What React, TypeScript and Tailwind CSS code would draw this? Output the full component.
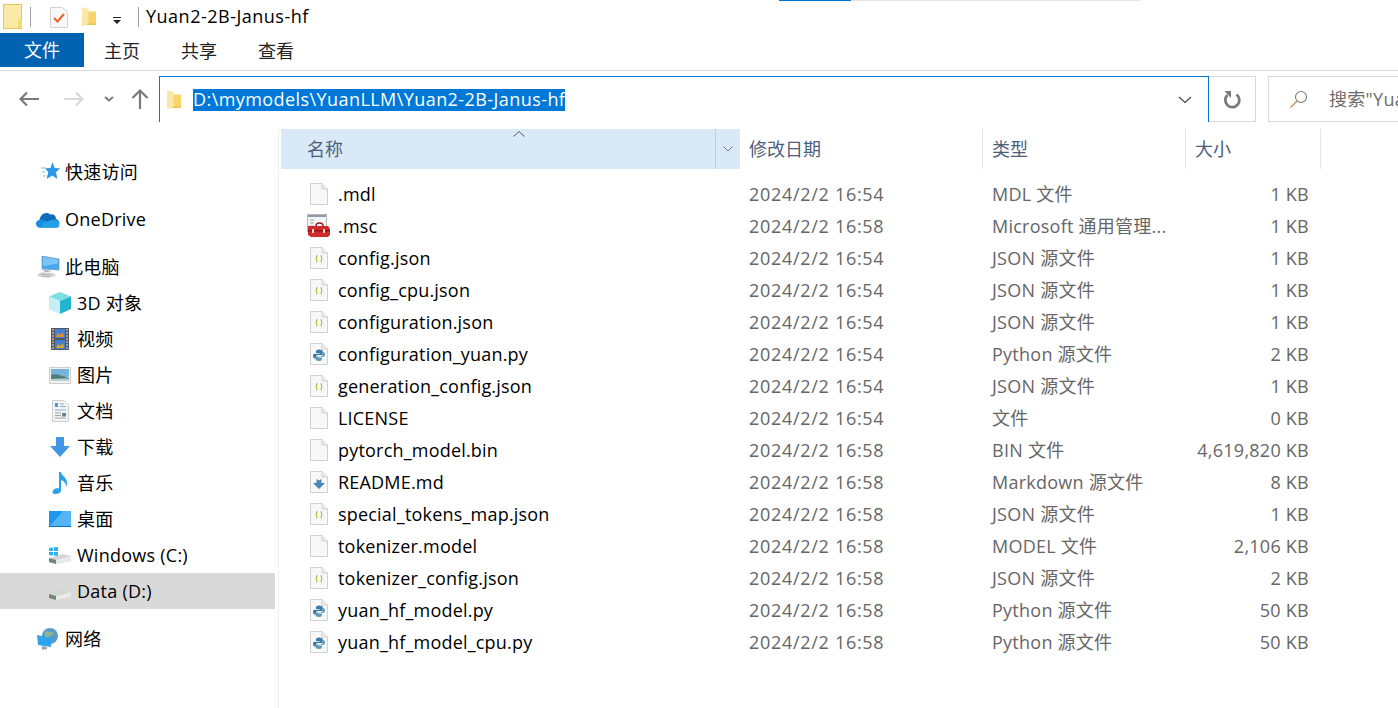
import { ReactNode } from 'react';

const font = "font-['Open_Sans','Noto_Sans_CJK_SC',sans-serif]";

type Kind = 'blank' | 'msc' | 'json' | 'py' | 'md';

const files: { name: string; date: string; type: string; size: string; kind: Kind }[] = [
  { name: '.mdl', date: '2024/2/2 16:54', type: 'MDL 文件', size: '1 KB', kind: 'blank' },
  { name: '.msc', date: '2024/2/2 16:58', type: 'Microsoft 通用管理...', size: '1 KB', kind: 'msc' },
  { name: 'config.json', date: '2024/2/2 16:54', type: 'JSON 源文件', size: '1 KB', kind: 'json' },
  { name: 'config_cpu.json', date: '2024/2/2 16:54', type: 'JSON 源文件', size: '1 KB', kind: 'json' },
  { name: 'configuration.json', date: '2024/2/2 16:54', type: 'JSON 源文件', size: '1 KB', kind: 'json' },
  { name: 'configuration_yuan.py', date: '2024/2/2 16:54', type: 'Python 源文件', size: '2 KB', kind: 'py' },
  { name: 'generation_config.json', date: '2024/2/2 16:54', type: 'JSON 源文件', size: '1 KB', kind: 'json' },
  { name: 'LICENSE', date: '2024/2/2 16:54', type: '文件', size: '0 KB', kind: 'blank' },
  { name: 'pytorch_model.bin', date: '2024/2/2 16:58', type: 'BIN 文件', size: '4,619,820 KB', kind: 'blank' },
  { name: 'README.md', date: '2024/2/2 16:58', type: 'Markdown 源文件', size: '8 KB', kind: 'md' },
  { name: 'special_tokens_map.json', date: '2024/2/2 16:58', type: 'JSON 源文件', size: '1 KB', kind: 'json' },
  { name: 'tokenizer.model', date: '2024/2/2 16:58', type: 'MODEL 文件', size: '2,106 KB', kind: 'blank' },
  { name: 'tokenizer_config.json', date: '2024/2/2 16:58', type: 'JSON 源文件', size: '2 KB', kind: 'json' },
  { name: 'yuan_hf_model.py', date: '2024/2/2 16:58', type: 'Python 源文件', size: '50 KB', kind: 'py' },
  { name: 'yuan_hf_model_cpu.py', date: '2024/2/2 16:58', type: 'Python 源文件', size: '50 KB', kind: 'py' },
];

function Page({ children }: { children?: ReactNode }) {
  return (
    <svg width="18" height="22" viewBox="0 0 18 22" className="shrink-0">
      <path d="M.5.5h11.500l5.500 5.500v15.500h-17z" fill="#f8f8f8" stroke="#d0d0d0" />
      <path d="M12 .5v5.500h5.500" fill="#ececec" stroke="#d0d0d0" />
      {children}
    </svg>
  );
}

function FileIcon({ kind }: { kind: Kind }) {
  if (kind === 'msc') {
    return (
      <svg width="24" height="24" viewBox="0 0 24 24" className="shrink-0 -ml-[3px] -mr-[3px]">
        <rect x=".5" y=".5" width="19" height="17" fill="#f4f4f4" stroke="#b9b9b9" />
        <rect x="1" y="1" width="18" height="2" fill="#8d9aa8" />
        <path d="M3 6h4M3 9h4M3 12h4" stroke="#9aa5b0" />
        <path d="M9 12c0-4 7-4 7 0" fill="none" stroke="#8a2020" strokeWidth="1.500" />
        <path d="M1 12h20l2 3v6l-2 2H4l-3-2z" fill="#cf2a2e" />
        <rect x="1" y="16" width="22" height="1.500" fill="#8f1518" />
        <rect x="5" y="15" width="2" height="4" fill="#e9d7c0" />
        <rect x="16" y="15" width="2" height="4" fill="#e9d7c0" />
      </svg>
    );
  }
  if (kind === 'json') {
    return (
      <Page>
        <path d="M7.500 8.500c-1.300 0-.9.9-.9 2.200 0 .8-.4.9-.9 1 .5.100.9.200.9 1 0 1.300-.4 2.200.9 2.200" fill="none" stroke="#bcbf3a" strokeWidth="1.200" />
        <path d="M10.500 8.500c1.300 0 .9.900.9 2.200 0 .8.400.9.900 1-.5.100-.9.200-.9 1 0 1.300.4 2.200-.9 2.200" fill="none" stroke="#bcbf3a" strokeWidth="1.200" />
      </Page>
    );
  }
  if (kind === 'py') {
    return (
      <Page>
        <path d="M9 6.500c-2.500 0-3 1-3 2v1.500h3.500v.8H4.500C3 10.800 3 12.500 3 13c0 1.500.7 2.500 2 2.500h1v-1.700c0-1 1-1.800 2-1.800h3c1 0 1.800-.8 1.800-1.800V8.500c0-1.200-1.300-2-3.800-2z" fill="#3b7ca8" />
        <path d="M9 18c2.500 0 3-1 3-2v-1.500H8.500v-.8h5c1.500 0 1.500-1.700 1.500-2.200 0-1.500-.7-2.500-2-2.500h-.5v1.700c0 1.800-1 2.800-2.500 2.800H7c-1 0-1.500.8-1.500 1.800V16c0 1.200 1 2 3.500 2z" fill="#5b9fc0" />
      </Page>
    );
  }
  if (kind === 'md') {
    return (
      <Page>
        <path d="M6.500 8l2.500 1.500L11.500 8v4H15l-6 6-6-6h3.500z" fill="#4a86b5" />
      </Page>
    );
  }
  return <Page />;
}

function FolderSmall() {
  return (
    <svg width="14" height="20" viewBox="0 0 14 20" className="shrink-0">
      <path d="M6 4.500h8V17H6z" fill="#f7d56c" />
      <path d="M0 0l6.500 2v15L0 19.500z" fill="#fbe8a4" />
      <path d="M6 16.500h8V18H4z" fill="#eec75a" />
    </svg>
  );
}

function SideIcon({ name }: { name: string }) {
  switch (name) {
    case 'star':
      return (
        <svg width="20" height="20" viewBox="0 0 20 20" className="ml-[3px]">
          <path d="M12.500 0l2.200 6 5.300.3-4 3.900 1.400 6.800-5-3.400-5.800 3.400 1.700-6.800L5 6.300l5.500-.3z" fill="#2f97ea" />
          <path d="M1 6h5M2 10h3M3 14h3" stroke="#a8d4f5" strokeWidth="1.300" />
        </svg>
      );
    case 'cloud':
      return (
        <svg width="24" height="17" viewBox="0 0 24 17">
          <path d="M4 16.500c-5 0-5-7-.5-7.500C4.500 3 10 0 14 3.500c5-1 6 3 6 4.500 4 .5 5 8.500 0 8.500z" fill="#0f6cbd" />
          <path d="M4 16.500c-5 0-5-7-.5-7.500 4-1 7 1 9 3 2-2 5-4 7.500-3.500 4 .5 4 8-.5 8z" fill="#1490df" />
          <path d="M8 16.500c-2 0-3-3 0-4.500 3-2 7-3 8-3.500 4 .5 8 1 7 8z" fill="#28a8ea" opacity=".7" />
        </svg>
      );
    case 'pc':
      return (
        <svg width="24" height="22" viewBox="0 0 24 22">
          <path d="M6 0l17 3v11l-17-1z" fill="#4aa8ef" stroke="#6f8ba3" strokeWidth=".6" />
          <path d="M7 1l15 2.600v4L7 10z" fill="#7cc5f7" />
          <path d="M6 14l10 1-6 1z" fill="#8a9aa5" />
          <path d="M6 16l12 1 2 3-8 2-12-2z" fill="#d6d8da" />
          <path d="M3 18l12 1M5 20l9 .5" stroke="#b2b5b8" />
        </svg>
      );
    case 'cube':
      return (
        <svg width="22" height="22" viewBox="0 0 22 22">
          <path d="M11 0l11 4.500-11 4.500L0 4.500z" fill="#7fdde6" />
          <path d="M0 4.500l11 4.500v13L0 17z" fill="#c6eff3" />
          <path d="M22 4.500L11 9v13l11-5z" fill="#25b4cd" />
        </svg>
      );
    case 'film':
      return (
        <svg width="18" height="22" viewBox="0 0 18 22">
          <rect width="18" height="22" fill="#54585c" />
          <rect x="4" y="1" width="10" height="9" fill="#3f7fd8" />
          <rect x="4" y="12" width="10" height="9" fill="#3f7fd8" />
          <path d="M5 9l2-4 2 2 3-3 1 5z" fill="#e88c2a" />
          <path d="M5 20l2-4 2 2 3-3 1 5z" fill="#d8a82a" />
          <path d="M1 2h2M1 5h2M1 8h2M1 11h2M1 14h2M1 17h2M1 20h2M15 2h2M15 5h2M15 8h2M15 11h2M15 14h2M15 17h2M15 20h2" stroke="#e4e4e4" />
        </svg>
      );
    case 'pic':
      return (
        <svg width="22" height="17" viewBox="0 0 22 17">
          <rect x=".5" y=".5" width="21" height="16" fill="#f1f1f1" stroke="#cfcfcf" />
          <rect x="2" y="2" width="18" height="8" fill="#78b3dc" />
          <path d="M2 8c5-2 8 0 18 3v3H2z" fill="#4f7f78" />
          <path d="M2 12c6 0 12-1 18 0v2H2z" fill="#b7cfd6" />
        </svg>
      );
    case 'doc':
      return (
        <svg width="17" height="22" viewBox="0 0 17 22">
          <path d="M.5.500H12L16.500 5v16.500H.5z" fill="#f3f3f3" stroke="#cfcfcf" />
          <path d="M3 3h3v4H3z" fill="#4a98dc" />
          <path d="M8 4h4M8 6.500h6M3 10h11" stroke="#7fb4dc" />
          <path d="M3 13h6M3 15.500h6M3 18h11" stroke="#a5a5a5" />
          <rect x="10" y="13" width="4" height="3.500" fill="#5a8a90" />
        </svg>
      );
    case 'down':
      return (
        <svg width="20" height="20" viewBox="0 0 20 20">
          <path d="M6 0h8v9h6L10 20 0 9h6z" fill="#3f97e6" />
        </svg>
      );
    case 'music':
      return (
        <svg width="16" height="22" viewBox="0 0 16 22">
          <path d="M7 0h2c.500 4 6 5 6 11 0 1.500-.5 3-1 4 0-4-2-6-5-7v10c0 3-3 4-6 4s-3-3-1-4.500c1-1 3-1.500 5-1z" fill="#27a3ea" />
        </svg>
      );
    case 'desk':
      return (
        <svg width="22" height="16" viewBox="0 0 22 16">
          <rect width="22" height="16" fill="#1e96f0" />
          <path d="M0 16L14 0h8v16z" fill="#54b4f5" />
          <rect y="15" width="22" height="1" fill="#0b6fc0" />
        </svg>
      );
    case 'win':
    case 'data':
      return (
        <svg width="22" height="17" viewBox="0 0 22 17">
          <path d="M0 11l14-4 8 2v5L7 17l-7-2z" fill="#d4d6d6" />
          <path d="M0 11l7 2v4l-7-2z" fill="#7c8080" />
          <path d="M7 13l15-4v5L7 17z" fill="#e8e9e9" />
          <path d="M3 14l2 .6" stroke="#39b54a" strokeWidth="1.200" />
          {name === 'win' && <path d="M0 1l4-.6V4H0zM5 .2L9 0v4H5zM0 5h4v3.500L0 8zM5 5h4v4l-4-.4z" fill="#27b4ee" />}
        </svg>
      );
    default:
      return (
        <svg width="22" height="22" viewBox="0 0 22 22">
          <circle cx="13" cy="8" r="8" fill="#5c9bc7" />
          <path d="M8 3c3 0 4 2 8 1 1 3-3 3-4 5s-3 1-4-1z" fill="#8fb98a" />
          <path d="M0 7l14 3v9L1 17z" fill="#2fa3ec" />
          <path d="M5 18l5 1v2l-5 1z" fill="#9aa5ad" />
        </svg>
      );
  }
}

function SideRow({ icon, label, indent, active }: { icon: string; label: string; indent?: boolean; active?: boolean }) {
  return (
    <div className={`flex h-9 items-center text-[18px] text-black ${active ? 'bg-[#d9d9d9]' : ''}`}>
      <div className={`flex justify-center ${indent ? 'ml-[47px] w-[26px]' : 'ml-[35px] w-[26px]'}`}>
        <SideIcon name={icon} />
      </div>
      <span className="ml-[4px] whitespace-nowrap tracking-[0.25px]">{label}</span>
    </div>
  );
}

function HeaderCell({ label, width, pl }: { label: string; width: string; pl: string }) {
  return (
    <div className={`flex h-10 items-center border-r border-[#e5e5e5] pt-px text-[18px] text-[#4c607a] ${width} ${pl}`}>{label}</div>
  );
}

export default function App() {
  return (
    <div className={`flex h-[708px] w-[1398px] flex-col overflow-hidden bg-white ${font}`}>
      {/* progress line along the top edge */}
      <div className="flex h-px shrink-0 pl-[779px]">
        <div className="w-[72px] bg-[#0078d7]" />
        <div className="w-[290px] bg-[#e6e6e6]" />
      </div>

      {/* title bar */}
      <div className="flex h-8 shrink-0 items-center">
        <svg width="20" height="25" viewBox="0 0 20 25" className="ml-[3px] mb-[2px]">
          <rect x=".5" y=".5" width="18" height="24" fill="#fbe9a8" stroke="#e8c65a" />
          <rect x="15" y="15" width="4" height="9" fill="#f8d970" />
        </svg>
        <div className="ml-[7px] h-5 w-px bg-[#a0a0a0]" />
        <svg width="18" height="21" viewBox="0 0 18 21" className="ml-[19px]">
          <path d="M.5.5h12l5 5v15H.5z" fill="#f8f8f8" stroke="#d2d2d2" />
          <path d="M4 11l3.500 3.500L14 7" fill="none" stroke="#e8602c" strokeWidth="2" />
        </svg>
        <div className="ml-[14px]">
          <FolderSmall />
        </div>
        <svg width="8" height="7" viewBox="0 0 8 7" className="ml-[17px] mt-[6px]">
          <rect width="8" height="1" fill="#222" />
          <path d="M0 3h8L4 7z" fill="#222" />
        </svg>
        <div className="ml-[17px] h-5 w-px bg-[#a0a0a0]" />
        <span className="mb-[2px] ml-[7px] whitespace-nowrap text-[18px] tracking-[0.5px] text-black">Yuan2-2B-Janus-hf</span>
      </div>

      {/* ribbon tabs */}
      <div className="flex h-[34px] shrink-0 text-[18px]">
        <div className="flex w-[84px] items-center justify-center bg-[#0063b1] text-white">文件</div>
        <div className="flex w-[77px] items-center pl-5 pt-[3px] text-[#222]">主页</div>
        <div className="flex w-[77px] items-center pl-5 pt-[3px] text-[#222]">共享</div>
        <div className="flex w-[77px] items-center pl-5 pt-[3px] text-[#222]">查看</div>
      </div>

      <div className="mt-[3px] h-px shrink-0 bg-[#d9d9d9]" />

      {/* address row */}
      <div className="mt-[5px] flex h-[46px] shrink-0 items-start">
        <svg width="20" height="16" viewBox="0 0 20 16" className="ml-[19px] mt-[15px] shrink-0">
          <path d="M20 8H2M8 1.500L1.500 8 8 14.500" fill="none" stroke="#7a7a7a" strokeWidth="2.200" />
        </svg>
        <svg width="20" height="16" viewBox="0 0 20 16" className="ml-[25px] mt-[15px] shrink-0">
          <path d="M0 8h18M12 1.500L18.500 8 12 14.500" fill="none" stroke="#d9d9d9" strokeWidth="2.200" />
        </svg>
        <svg width="10" height="6" viewBox="0 0 10 6" className="ml-[20px] mt-[20px] shrink-0">
          <path d="M1 1l4 3.500L9 1" fill="none" stroke="#7a7a7a" strokeWidth="2" />
        </svg>
        <svg width="18" height="20" viewBox="0 0 18 20" className="ml-[17px] mt-[13px] shrink-0">
          <path d="M9 20V2M1.500 9L9 1.500 16.500 9" fill="none" stroke="#7a7a7a" strokeWidth="2.200" />
        </svg>
        <div className="ml-[10px] flex h-[46px] w-[1050px] shrink-0 items-center border-x border-t border-[#0078d7] pl-[7px]">
          <FolderSmall />
          <span className="ml-[12px] flex h-[22px] items-center whitespace-nowrap bg-[#0078d7] text-[18px] tracking-[0.43px] text-white">
            D:\mymodels\YuanLLM\Yuan2-2B-Janus-hf
          </span>
          <svg width="14" height="8" viewBox="0 0 14 8" className="ml-auto mr-[16px]">
            <path d="M1 1l6 5.500L13 1" fill="none" stroke="#444" strokeWidth="1.200" />
          </svg>
        </div>
        <div className="flex h-[46px] w-[47px] shrink-0 items-center justify-center border-y border-r border-[#d9d9d9]">
          <svg width="20" height="20" viewBox="0 0 20 20">
            <path d="M14.500 5.500a7 7 0 1 1-9 .5" fill="none" stroke="#7a7a7a" strokeWidth="2.800" />
            <path d="M2.500 2h6.500v7z" fill="#7a7a7a" />
          </svg>
        </div>
        <div className="ml-3 flex h-[46px] w-[142px] shrink-0 items-center overflow-hidden border border-r-0 border-[#d9d9d9] pl-[21px]">
          <svg width="18" height="18" viewBox="0 0 18 18" className="shrink-0">
            <circle cx="11" cy="7" r="5.500" fill="none" stroke="#7a7a7a" strokeWidth="1.100" />
            <path d="M7 11l-6.500 6.500" stroke="#c98a4a" strokeWidth="1.300" />
          </svg>
          <span className="ml-[21px] whitespace-nowrap text-[18px] tracking-[0.3px] text-[#6d6d6d]">搜索"Yua</span>
        </div>
      </div>

      <div className="mt-[7px] flex min-h-0 flex-1">
        {/* navigation pane */}
        <div className="w-[279px] shrink-0 border-r border-[#f0f0f0] pt-[25px]">
          <div className="w-[275px]">
            <SideRow icon="star" label="快速访问" />
            <div className="mt-[11px]">
              <SideRow icon="cloud" label="OneDrive" />
            </div>
            <div className="mt-3">
              <SideRow icon="pc" label="此电脑" />
              <SideRow icon="cube" label="3D 对象" indent />
              <SideRow icon="film" label="视频" indent />
              <SideRow icon="pic" label="图片" indent />
              <SideRow icon="doc" label="文档" indent />
              <SideRow icon="down" label="下载" indent />
              <SideRow icon="music" label="音乐" indent />
              <SideRow icon="desk" label="桌面" indent />
              <SideRow icon="win" label="Windows (C:)" indent />
              <SideRow icon="data" label="Data (D:)" indent active />
            </div>
            <div className="mt-3">
              <SideRow icon="net" label="网络" />
            </div>
          </div>
        </div>

        {/* file list */}
        <div className="min-w-0 flex-1 pl-[2px]">
          <div className="flex h-10">
            <div className="relative flex h-10 w-[459px] bg-[#d9e9f8] text-[18px] text-[#4c607a]">
              <span className="flex flex-1 items-center pl-[26px] pt-px">名称</span>
              <svg width="12" height="6" viewBox="0 0 12 6" className="absolute left-[232px] top-[2px]">
                <path d="M.5 5.500L6 .5l5.500 5" fill="none" stroke="#555" />
              </svg>
              <div className="flex w-[25px] items-center justify-center border-l border-[#bcd0e2]">
                <svg width="10" height="6" viewBox="0 0 10 6">
                  <path d="M.5.5L5 5 9.500.5" fill="none" stroke="#6d7a88" />
                </svg>
              </div>
            </div>
            <HeaderCell label="修改日期" width="w-[243px]" pl="pl-[9px]" />
            <HeaderCell label="类型" width="w-[203px]" pl="pl-[9px]" />
            <HeaderCell label="大小" width="w-[135px]" pl="pl-[9px]" />
          </div>
          <div className="pt-[9px]">
            {files.map((f) => (
              <div key={f.name} className="flex h-8 items-center text-[18px]">
                <div className="flex w-[57px] justify-end pr-[10px]">
                  <FileIcon kind={f.kind} />
                </div>
                <span className="w-[411px] whitespace-nowrap tracking-[0.2px] text-black">{f.name}</span>
                <span className="w-[243px] whitespace-nowrap tracking-[0.7px] text-[#666]">{f.date}</span>
                <span className="w-[190px] whitespace-nowrap tracking-[0.25px] text-[#666]">{f.type}</span>
                <span className="w-[127px] whitespace-nowrap text-right tracking-[0.25px] text-[#666]">{f.size}</span>
              </div>
            ))}
          </div>
        </div>
      </div>
    </div>
  );
}
